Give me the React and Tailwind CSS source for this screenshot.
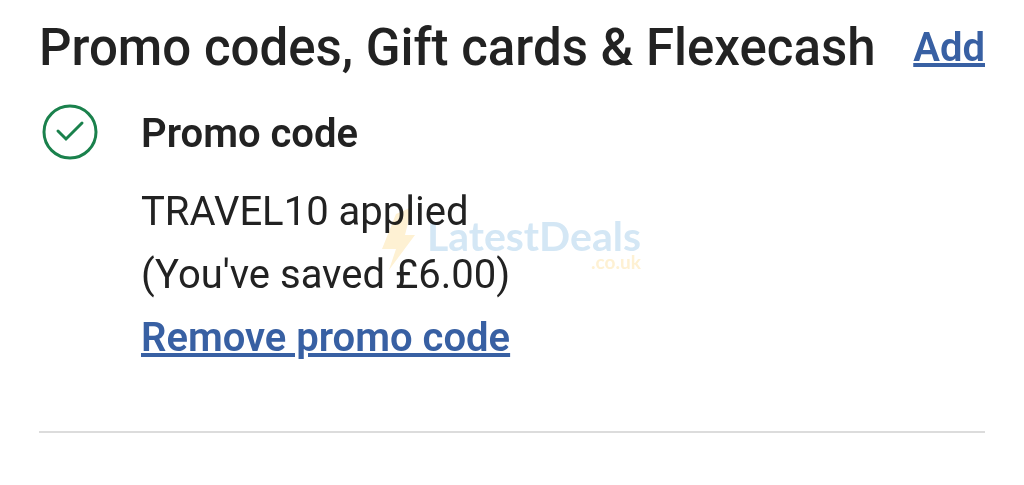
const Watermark = () => (
  <div
    aria-hidden="true"
    className="pointer-events-none absolute left-60 top-24 flex items-start font-['Lato',sans-serif] mix-blend-multiply"
  >
    <svg width="38" height="72" viewBox="0 0 38 72" className="shrink-0">
      <path d="M15 14 L31 7 L24 35 H34 L8 70 L15 49 H1 Z" fill="#fef1d3" />
    </svg>
    <div className="ml-2 mt-4 flex flex-col items-end">
      <span className="text-[41px] leading-10 font-bold text-[#d4e7f5]">LatestDeals</span>
      <span className="text-[19px] leading-3 font-bold text-[#fef1d3]">.co.uk</span>
    </div>
  </div>
);

const CheckCircle = () => (
  <svg width="60" height="56" viewBox="0 0 60 56" fill="none" className="shrink-0">
    <circle cx="31" cy="28" r="26" stroke="#1a814c" strokeWidth="3" />
    <path
      d="M19 27 L27 35 L43 19"
      stroke="#1a814c"
      strokeWidth="3"
      strokeLinecap="round"
    />
  </svg>
);

const App = () => {
  return (
    <main className="bg-white px-[39px] pt-5 font-['Roboto',sans-serif] text-[#222222]">
      <section className="border-b-2 border-[#dcdcdc] pb-[62px]">
        <header className="flex items-center justify-between">
          <h1 className="text-[51px] leading-14 font-medium">
            Promo codes, Gift cards &amp; Flexecash
          </h1>
          <a href="#add" className="text-[40px] leading-14 font-semibold text-[#3860a3] underline">
            Add
          </a>
        </header>

        <div className="mt-7 flex items-start gap-[42px]">
          <CheckCircle />
          <div className="relative">
            <h2 className="mt-0.5 text-[40px] leading-14 font-semibold">Promo code</h2>
            <p className="mt-[18px] text-[40px] leading-[63px]">TRAVEL10 applied</p>
            <p className="text-[40px] leading-[63px]">(You've saved £6.00)</p>
            <a href="#remove" className="text-[40px] leading-[63px] font-semibold text-[#3860a3] underline">
              Remove promo code
            </a>
            <Watermark />
          </div>
        </div>
      </section>
    </main>
  );
};

export default App;
